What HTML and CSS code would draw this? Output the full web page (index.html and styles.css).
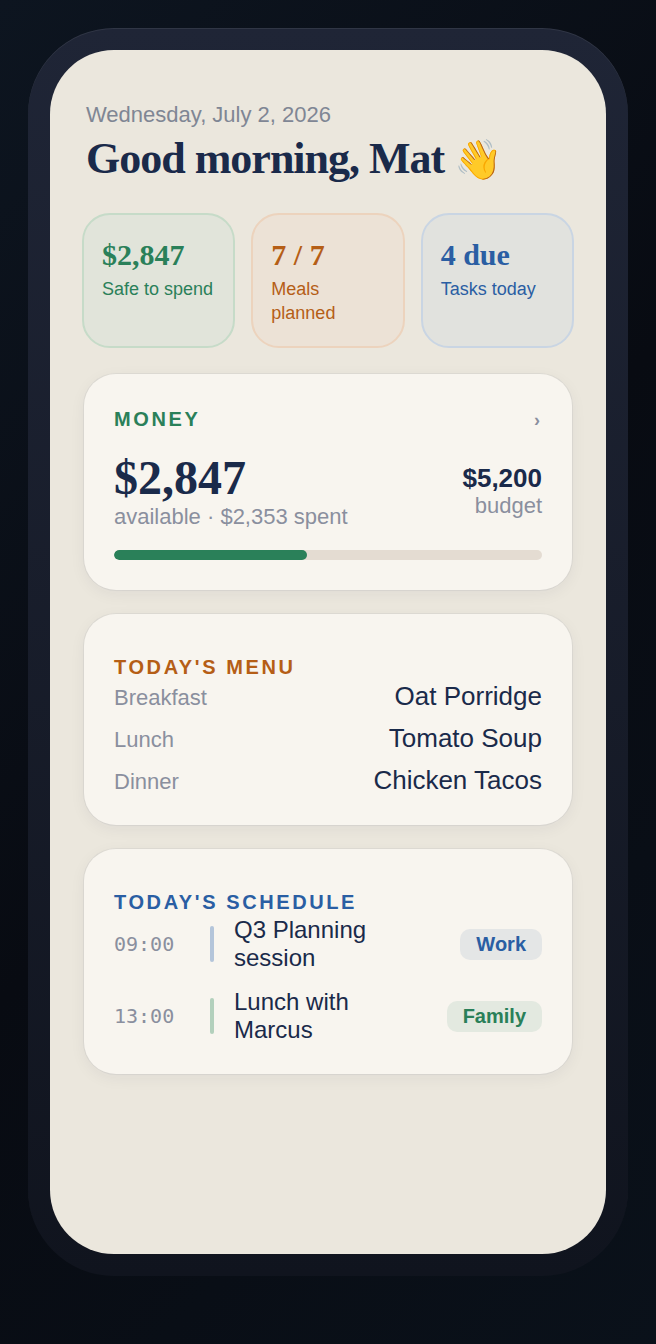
FILE: index.html
```html
<!DOCTYPE html>
<html>
<head>
	<meta charset="utf-8">
	<title>Today</title>
	<link rel="stylesheet" href="styles.css">
</head>
<body>
	<div class="phone">
		<main class="screen">
			<header class="masthead">
				<p class="date">Wednesday, July 2, 2026</p>
				<h1 class="greeting">Good morning, Mat <span class="wave">👋</span></h1>
			</header>
			<section class="stats">
				<div class="stat stat-green">
					<div class="stat-value">$2,847</div>
					<div class="stat-label">Safe to spend</div>
				</div>
				<div class="stat stat-orange">
					<div class="stat-value">7 / 7</div>
					<div class="stat-label">Meals planned</div>
				</div>
				<div class="stat stat-blue">
					<div class="stat-value">4 due</div>
					<div class="stat-label">Tasks today</div>
				</div>
			</section>
			<section class="card card-money">
				<div class="card-head">
					<h2 class="card-title green">MONEY</h2>
					<span class="chevron">›</span>
				</div>
				<div class="money-row">
					<div>
						<div class="money-amount">$2,847</div>
						<div class="money-sub">available · $2,353 spent</div>
					</div>
					<div class="money-budget">
						<div class="budget-value">$5,200</div>
						<div class="money-sub">budget</div>
					</div>
				</div>
				<div class="progress"><div class="progress-fill" style="width: 45.2%"></div></div>
			</section>
			<section class="card card-menu">
				<h2 class="card-title orange">TODAY'S MENU</h2>
				<div class="meal"><span class="meal-name">Breakfast</span><span class="meal-dish">Oat Porridge</span></div>
				<div class="meal"><span class="meal-name">Lunch</span><span class="meal-dish">Tomato Soup</span></div>
				<div class="meal"><span class="meal-name">Dinner</span><span class="meal-dish">Chicken Tacos</span></div>
			</section>
			<section class="card card-schedule">
				<h2 class="card-title blue">TODAY'S SCHEDULE</h2>
				<div class="event">
					<span class="event-time">09:00</span>
					<span class="event-bar bar-blue"></span>
					<span class="event-name">Q3 Planning session</span>
					<span class="tag tag-blue">Work</span>
				</div>
				<div class="event">
					<span class="event-time">13:00</span>
					<span class="event-bar bar-green"></span>
					<span class="event-name">Lunch with Marcus</span>
					<span class="tag tag-green">Family</span>
				</div>
			</section>
		</main>
	</div>
</body>
</html>
```

FILE: styles.css
```css
*, *:before, *:after {
	box-sizing: border-box;
}
html, body {
	height: 100%;
}
body {
	margin: 0;
	padding: 28px;
	font-family: "Liberation Sans", Arial, sans-serif;
	color: #1a2a4a;
	background: linear-gradient(135deg, #0d1520 0%, #080b12 50%, #0a111a 100%);
}
h1, h2, p {
	margin: 0;
}
.phone {
	height: 1248px;
	padding: 22px;
	border-radius: 86px;
	background: linear-gradient(180deg, #1f2536 0%, #10141e 100%);
	box-shadow: inset 0 1px 0 rgba(255, 255, 255, 0.08);
}
.screen {
	height: 100%;
	padding: 52px 32px 0;
	border-radius: 64px;
	background: #ebe7dd;
	overflow: hidden;
}
.masthead {
	padding: 0 4px;
}
.date {
	font-size: 22px;
	line-height: 26px;
	color: #7f8694;
}
.greeting {
	margin-top: 5px;
	font-family: "Liberation Serif", "Times New Roman", serif;
	font-size: 44px;
	line-height: 52px;
	font-weight: 700;
	letter-spacing: -1px;
}
.wave {
	font-family: "Noto Color Emoji", sans-serif;
	font-weight: 400;
	font-size: 39px;
	letter-spacing: 0;
}
.stats {
	display: grid;
	grid-template-columns: repeat(3, 1fr);
	gap: 16px;
	margin-top: 27px;
}
.stat {
	height: 135px;
	padding: 22px 18px;
	border: 2px solid;
	border-radius: 28px;
}
.stat-value {
	font-family: "Liberation Serif", "Times New Roman", serif;
	font-size: 30px;
	line-height: 36px;
	font-weight: 700;
}
.stat-label {
	margin-top: 4px;
	font-size: 18px;
	line-height: 24px;
}
.stat-green {
	color: #2a8059;
	background: #e1e4da;
	border-color: #c6dbc8;
}
.stat-orange {
	color: #b55e16;
	background: #ece2d6;
	border-color: #ecd3bd;
}
.stat-blue {
	color: #2a5ea3;
	background: #e1e2de;
	border-color: #c9d5e3;
}
.card {
	margin: 24px 2px 0;
	padding: 43px 30px 30px;
	border-radius: 32px;
	background: #f8f5ef;
	box-shadow: 0 0 0 1px rgba(26, 42, 74, 0.05), 0 4px 16px rgba(26, 42, 74, 0.06);
}
.card-money {
	margin-top: 26px;
	padding-top: 33px;
}
.card-menu {
	padding-bottom: 22px;
}
.card-head {
	display: flex;
	justify-content: space-between;
	align-items: center;
}
.card-title {
	font-size: 20px;
	line-height: 20px;
	font-weight: 700;
	letter-spacing: 2.6px;
}
.green {
	color: #2a8059;
}
.orange {
	color: #b55e16;
}
.blue {
	color: #2a5ea3;
}
.chevron {
	font-size: 18px;
	line-height: 20px;
	font-weight: 700;
	color: #8a8f9e;
	padding: 3px 2px 0 0;
}
.money-row {
	display: flex;
	justify-content: space-between;
	align-items: flex-end;
	margin-top: 22px;
}
.money-amount {
	font-family: "Liberation Serif", "Times New Roman", serif;
	font-size: 48px;
	line-height: 52px;
	font-weight: 700;
}
.money-sub {
	font-size: 22px;
	line-height: 26px;
	color: #8a8f9e;
}
.money-budget {
	text-align: right;
	padding-bottom: 11px;
}
.budget-value {
	font-size: 26px;
	line-height: 30px;
	font-weight: 700;
}
.progress {
	height: 10px;
	margin-top: 20px;
	border-radius: 5px;
	background: #e4dcd2;
	overflow: hidden;
}
.progress-fill {
	height: 100%;
	border-radius: 5px;
	background: #2a8059;
}
.meal {
	display: flex;
	justify-content: space-between;
	align-items: baseline;
	height: 42px;
	line-height: 38px;
}
.meal-name {
	font-size: 22px;
	color: #8a8f9e;
}
.meal-dish {
	font-size: 26px;
}
.event {
	display: flex;
	align-items: center;
	margin-top: 16px;
}
.card-title + .event {
	margin-top: 4px;
}
.event-time {
	width: 96px;
	font-family: "DejaVu Sans Mono", monospace;
	font-size: 20px;
	color: #8a8f9e;
}
.event-bar {
	width: 4px;
	height: 36px;
	border-radius: 2px;
}
.bar-blue {
	background: #b4c5da;
}
.bar-green {
	background: #b3d0bc;
}
.event-name {
	width: 170px;
	margin-left: 20px;
	font-size: 24px;
	line-height: 28px;
}
.tag {
	margin-left: auto;
	padding: 0 16px;
	height: 31px;
	line-height: 31px;
	border-radius: 10px;
	font-size: 20px;
	font-weight: 700;
}
.tag-blue {
	color: #2a5ea3;
	background: #e4e6e6;
}
.tag-green {
	color: #2a8059;
	background: #e3e9e0;
}
```
